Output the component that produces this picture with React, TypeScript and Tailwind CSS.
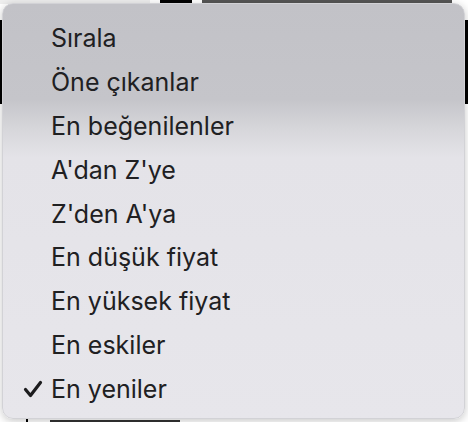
import React from 'react'

const items = [
  'Sırala',
  'Öne çıkanlar',
  'En beğenilenler',
  "A'dan Z'ye",
  "Z'den A'ya",
  'En düşük fiyat',
  'En yüksek fiyat',
  'En eskiler',
  'En yeniler',
]

export default function App() {
  return (
    <div className="relative w-[468px] h-[422px] overflow-hidden bg-white" style={{ fontFamily: 'Inter, "Noto Sans", sans-serif' }}>
      {/* page behind the menu */}
      <div className="flex items-start h-[4px]">
        <div className="w-[150px] h-[4px] bg-[#eeeeee]" />
        <div className="w-[32px] h-[4px] bg-black ml-[10px]" />
        <div className="ml-[10px] w-[250px] h-[3px] bg-[#555]" />
      </div>
      <div className="mt-[16px] h-[84px] bg-black" />
      <div className="absolute left-[26px] bottom-0 w-[2px] h-[3px] bg-black" />
      <div className="absolute left-[50px] bottom-0 w-[130px] h-[2px] bg-[#333]" />

      {/* menu */}
      <div className="absolute left-[2px] top-[3px] w-[463px] h-[416px] rounded-[11px] border border-[#d2d2d6] shadow-[0_2px_8px_rgba(0,0,0,0.22)] bg-[linear-gradient(to_bottom,#c2c2c7_0%,#c5c5ca_23%,#d6d6da_30%,#e4e3e8_37%,#e7e6eb_100%)] pt-[13px]">
        {items.map((label, i) => (
          <div key={label} className="flex items-center h-[43.8px]">
            <div className="w-[48px] flex justify-end pr-[8px]">
              {i === items.length - 1 && (
                <svg width="20" height="18" viewBox="0 0 20 18">
                  <path d="M2.5 9.5 L7.5 15.5 L17.5 2.5" fill="none" stroke="#1c1c1e" strokeWidth="3.2" strokeLinecap="round" strokeLinejoin="round" />
                </svg>
              )}
            </div>
            <span className="text-[25px] leading-none text-[#202022]">{label}</span>
          </div>
        ))}
      </div>
    </div>
  )
}
